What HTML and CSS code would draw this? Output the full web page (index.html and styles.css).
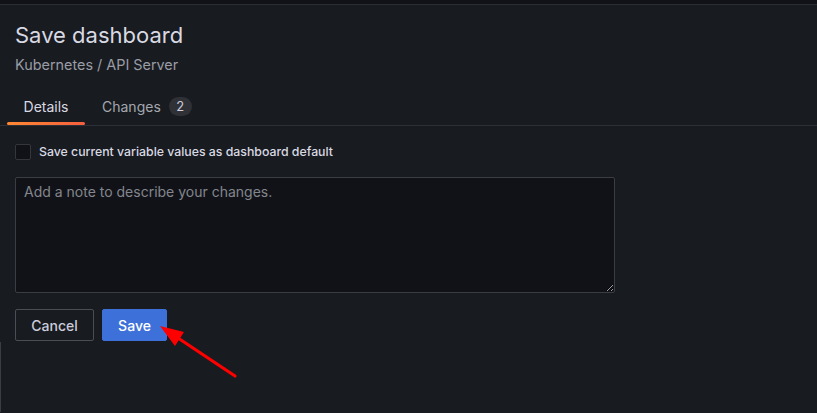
FILE: index.html
```html
<!DOCTYPE html>
<html>
<head>
<meta charset="utf-8">
<link rel="stylesheet" href="styles.css">
</head>
<body>
<div class="topstrip"></div>
<div class="panel">
  <h1 class="title">Save dashboard</h1>
  <div class="subtitle">Kubernetes / API Server</div>
  <div class="tabs">
    <div class="tab active">Details</div>
    <div class="tab">Changes <span class="badge">2</span></div>
  </div>
  <div class="body">
    <label class="check">
      <span class="box"></span>
      <span class="check-label">Save current variable values as dashboard default</span>
    </label>
    <textarea class="note" placeholder="Add a note to describe your changes."></textarea>
    <div class="actions">
      <button class="btn secondary">Cancel</button>
      <button class="btn primary">Save</button>
    </div>
  </div>
  <div class="edge"></div>
  <svg class="arrow" width="817" height="413" viewBox="0 0 817 413">
    <line x1="235" y1="377" x2="175" y2="337" stroke="#ff0000" stroke-width="3.2" stroke-linecap="round"/>
    <polygon points="160,327 184,333 175,347" fill="#ff0000"/>
  </svg>
</div>
</body>
</html>
```
FILE: styles.css
```css
* { box-sizing: border-box; }
html, body {
  margin: 0;
  padding: 0;
  width: 817px;
  height: 413px;
  overflow: hidden;
  background: #181b1f;
  font-family: Inter, "Noto Sans", sans-serif;
  color: #ccccdc;
}
.topstrip {
  height: 5px;
  background: #111217;
  border-bottom: 1px solid #2a2d33;
}
.panel {
  position: relative;
  height: 407px;
  background: #181b1f;
  padding-top: 17px;
}
.title {
  margin: 0 0 0 15px;
  font-size: 22px;
  font-weight: 400;
  line-height: 26px;
  color: #d8d9e3;
}
.subtitle {
  margin: 8px 0 0 15px;
  font-size: 14.4px;
  line-height: 18px;
  color: #9a9ca6;
}
.tabs {
  display: flex;
  margin-top: 18px;
  padding-left: 7px;
  border-bottom: 1px solid #2d3036;
  height: 34px;
}
.tab {
  display: flex;
  align-items: center;
  gap: 8px;
  height: 33px;
  padding: 0 17px 5px;
  font-size: 14px;
  color: #a4a7b0;
  position: relative;
}
.tab.active {
  color: #d8d9e3;
  width: 78px;
  justify-content: center;
}
.tab.active::after {
  content: "";
  position: absolute;
  left: 0;
  right: 0;
  bottom: 0;
  height: 3px;
  border-radius: 2px;
  background: linear-gradient(90deg, #ff8833, #f55f3e);
}
.badge {
  display: inline-flex;
  align-items: center;
  justify-content: center;
  width: 23px;
  height: 19px;
  border-radius: 10px;
  background: #2f3137;
  color: #ccccdc;
  font-size: 13px;
}
.body {
  padding: 17px 15px 0;
}
.check {
  display: flex;
  align-items: center;
  gap: 8px;
  height: 17px;
}
.box {
  width: 16px;
  height: 16px;
  border: 1px solid #33363d;
  border-radius: 2px;
  background: #111217;
}
.check-label {
  font-size: 12.3px;
  font-weight: 500;
  color: #d8d9e3;
}
.note {
  display: block;
  margin-top: 17px;
  width: 600px;
  height: 116px;
  background: #111217;
  border: 1px solid #3a3d44;
  border-radius: 2px;
  padding: 5px 8px;
  font-family: Inter, "Noto Sans", sans-serif;
  font-size: 14px;
  line-height: 18px;
  color: #ccccdc;
  resize: vertical;
}
.note::placeholder { color: #83868e; }
.actions {
  display: flex;
  gap: 8px;
  margin-top: 16px;
}
.btn {
  height: 32px;
  padding: 0 15px;
  border-radius: 2px;
  font-family: Inter, "Noto Sans", sans-serif;
  font-size: 14px;
  font-weight: 500;
}
.btn.secondary {
  width: 79px;
  background: transparent;
  border: 1px solid #4a4d54;
  color: #ccccdc;
}
.btn.primary {
  width: 65px;
  background: #3d71d9;
  border: 1px solid #3d71d9;
  color: #ffffff;
}
.edge {
  position: absolute;
  left: 0;
  top: 337px;
  width: 1px;
  bottom: 0;
  background: #3a3d44;
}
.arrow {
  position: absolute;
  left: 0;
  top: -6px;
  pointer-events: none;
}
```
